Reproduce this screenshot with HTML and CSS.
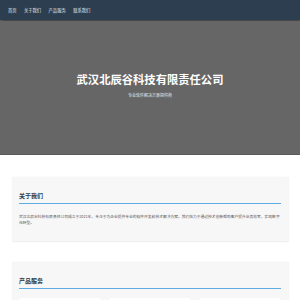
FILE: index.html
```html
<!DOCTYPE html>
<html lang="zh-CN">
<head>
<meta charset="utf-8">
<title>武汉北辰谷科技有限责任公司</title>
<link rel="stylesheet" href="styles.css">
</head>
<body>
<nav class="nav">
  <a class="nav-link" href="#">首页</a>
  <a class="nav-link" href="#">关于我们</a>
  <a class="nav-link" href="#">产品服务</a>
  <a class="nav-link" href="#">联系我们</a>
</nav>
<header class="hero">
  <h1 class="hero-title">武汉北辰谷科技有限责任公司</h1>
  <p class="hero-sub">专业软件解决方案提供商</p>
</header>
<main class="main">
  <section class="card">
    <h2 class="card-title">关于我们</h2>
    <p class="card-text">武汉北辰谷科技有限责任公司成立于2021年，专注于为企业提供专业的软件开发和技术解决方案。我们致力于通过技术创新帮助客户提升业务效率，实现数字化转型。</p>
  </section>
  <section class="card">
    <h2 class="card-title">产品服务</h2>
    <div class="grid">
      <div class="item"><h3>软件开发</h3><p>定制化软件开发服务</p></div>
      <div class="item"><h3>技术咨询</h3><p>专业技术咨询服务</p></div>
      <div class="item"><h3>系统集成</h3><p>企业系统集成方案</p></div>
    </div>
  </section>
</main>
</body>
</html>
```
FILE: styles.css
```css
html, body {
  margin: 0;
  padding: 0;
  background: #fff;
}
body {
  font-family: "Noto Sans CJK SC", "Noto Sans", sans-serif;
  color: #333;
}
.nav {
  height: 20px;
  background: #2c3e50;
  display: flex;
  align-items: center;
  gap: 7.4px;
  padding-left: 8px;
  box-shadow: 0 0.5px 1px rgba(0,0,0,0.3);
  position: relative;
  z-index: 1;
}
.nav-link {
  color: #e6e9ec;
  text-decoration: none;
  font-size: 4.3px;
  line-height: 5px;
}
.hero {
  height: 135px;
  background: #666;
  display: flex;
  flex-direction: column;
  align-items: center;
  justify-content: center;
  box-sizing: border-box;
  padding-bottom: 4px;
  border-bottom: 1px solid #5a5a5a;
}
.hero-title {
  margin: 0;
  color: #fff;
  font-size: 11.3px;
  line-height: 14px;
  font-weight: 700;
}
.hero-sub {
  margin: 6px 0 0;
  color: #e8e8e8;
  font-size: 4px;
  line-height: 6px;
}
.main {
  padding: 22px 11.5px 0;
  display: flex;
  flex-direction: column;
  gap: 21px;
}
.card {
  background: #f7f7f7;
  border-radius: 2px;
  padding: 7.5px;
  box-shadow: 0 0.5px 1.5px rgba(0,0,0,0.08);
}
.card-title {
  margin: 7px 0 0;
  font-size: 6px;
  line-height: 7px;
  color: #2c3e50;
  font-weight: 700;
  padding-bottom: 4.7px;
  border-bottom: 0.8px solid #5dade2;
}
.card-text {
  margin: 9.7px 0 7.8px;
  font-size: 3.78px;
  line-height: 6px;
  color: #555;
}
.grid {
  margin-top: 8.5px;
  display: grid;
  grid-template-columns: 1fr 1fr 1fr;
  gap: 8.5px;
}
.item {
  background: #fff;
  border-radius: 1.5px;
  padding: 5px;
  box-shadow: 0 0.5px 1px rgba(0,0,0,0.06);
}
.item h3 {
  margin: 0;
  font-size: 5px;
  color: #2c3e50;
}
.item p {
  margin: 3px 0 0;
  font-size: 4px;
  color: #666;
}
```
